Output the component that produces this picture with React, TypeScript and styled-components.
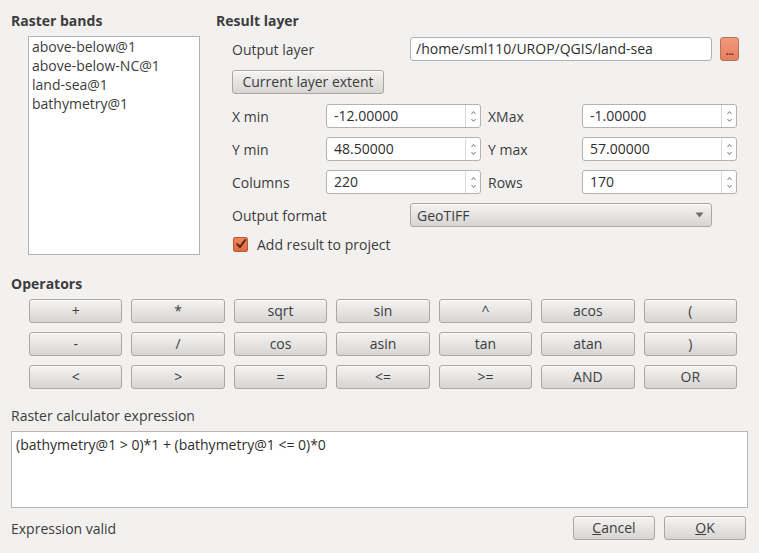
import { FC } from 'react'
import styled, { createGlobalStyle } from 'styled-components'

const GlobalStyle = createGlobalStyle`
  html, body {
    margin: 0;
    padding: 0;
    background: #f2f1f0;
  }
  body {
    font-family: 'Open Sans', 'Noto Sans', sans-serif;
    font-size: 14px;
    color: #3c3c3c;
  }
`

const bands = ['above-below@1', 'above-below-NC@1', 'land-sea@1', 'bathymetry@1']

const operators = [
  ['+', '*', 'sqrt', 'sin', '^', 'acos', '('],
  ['-', '/', 'cos', 'asin', 'tan', 'atan', ')'],
  ['<', '>', '=', '<=', '>=', 'AND', 'OR'],
]

const extents = [
  ['X min', '-12.00000', 'XMax', '-1.00000'],
  ['Y min', '48.50000', 'Y max', '57.00000'],
  ['Columns', '220', 'Rows', '170'],
]

const SpinArrows: FC = () => (
  <Arrows>
    <svg width="7" height="5" viewBox="0 0 7 5">
      <path d="M1.5 4 L3.5 1.5 L5.5 4" fill="none" stroke="#7a7876" strokeWidth="1" />
    </svg>
    <svg width="7" height="5" viewBox="0 0 7 5">
      <path d="M1.5 1 L3.5 3.5 L5.5 1" fill="none" stroke="#7a7876" strokeWidth="1" />
    </svg>
  </Arrows>
)

const SpinBox: FC<{ value: string }> = ({ value }) => (
  <Spin>
    <SpinValue>{value}</SpinValue>
    <SpinArrows />
  </Spin>
)

export default function App() {
  return (
    <Dialog>
      <GlobalStyle />
      <Top>
        <BandsSection>
          <Heading>Raster bands</Heading>
          <BandList>
            {bands.map((b) => (
              <BandItem key={b}>{b}</BandItem>
            ))}
          </BandList>
        </BandsSection>
        <ResultSection>
          <Heading>Result layer</Heading>
          <Form>
            <FieldRow>
              <WideLabel>Output layer</WideLabel>
              <PathInput>/home/sml110/UROP/QGIS/land-sea</PathInput>
              <BrowseButton>...</BrowseButton>
            </FieldRow>
            <ExtentButton>Current layer extent</ExtentButton>
            <ExtentGrid>
              {extents.map(([l1, v1, l2, v2]) => (
                <ExtentRow key={l1}>
                  <span>{l1}</span>
                  <SpinBox value={v1} />
                  <span>{l2}</span>
                  <SpinBox value={v2} />
                </ExtentRow>
              ))}
            </ExtentGrid>
            <FieldRow>
              <WideLabel>Output format</WideLabel>
              <Combo>
                <span>GeoTIFF</span>
                <svg width="9" height="6" viewBox="0 0 9 6">
                  <path d="M0.5 0.5 L8.5 0.5 L4.5 5.5 Z" fill="#6e6c6a" />
                </svg>
              </Combo>
            </FieldRow>
            <CheckRow>
              <CheckBox>
                <svg width="12" height="12" viewBox="0 0 12 12">
                  <path
                    d="M2.2 6.2 L5 9 L10.2 2"
                    fill="none"
                    stroke="#4a2414"
                    strokeWidth="1.9"
                    strokeLinecap="round"
                    strokeLinejoin="round"
                  />
                </svg>
              </CheckBox>
              <span>Add result to project</span>
            </CheckRow>
          </Form>
        </ResultSection>
      </Top>

      <OperatorsHeading>Operators</OperatorsHeading>
      <OperatorGrid>
        {operators.flat().map((op) => (
          <OpButton key={op}>{op}</OpButton>
        ))}
      </OperatorGrid>

      <ExprLabel>Raster calculator expression</ExprLabel>
      <ExprBox>(bathymetry@1 &gt; 0)*1 + (bathymetry@1 &lt;= 0)*0</ExprBox>

      <Footer>
        <span>Expression valid</span>
        <ButtonBox>
          <DialogButton>
            <u>C</u>ancel
          </DialogButton>
          <DialogButton>
            <u>O</u>K
          </DialogButton>
        </ButtonBox>
      </Footer>
    </Dialog>
  )
}

const Dialog = styled.div`
  width: 759px;
  height: 553px;
  box-sizing: border-box;
  padding: 12px 11px 0 11px;
  display: flex;
  flex-direction: column;
`

const Top = styled.div`
  display: flex;
  height: 243px;
`

const Heading = styled.div`
  font-weight: bold;
  line-height: 18px;
  height: 18px;
`

const BandsSection = styled.div`
  width: 205px;
  display: flex;
  flex-direction: column;
`

const BandList = styled.div`
  margin: 6px 0 0 17px;
  width: 172px;
  height: 219px;
  box-sizing: border-box;
  background: #fff;
  border: 1px solid #b4b2b0;
  padding: 0 3px;
`

const BandItem = styled.div`
  line-height: 19px;
`

const ResultSection = styled.div`
  flex: 1;
  display: flex;
  flex-direction: column;
`

const Form = styled.div`
  margin: 7px 0 0 16px;
  display: flex;
  flex-direction: column;
`

const FieldRow = styled.div`
  display: flex;
  align-items: center;
  height: 24px;
`

const WideLabel = styled.span`
  width: 178px;
`

const PathInput = styled.div`
  width: 302px;
  height: 24px;
  box-sizing: border-box;
  background: #fff;
  border: 1px solid #b4b2b0;
  border-radius: 3px;
  padding: 0 5px;
  line-height: 22px;
  color: #2e2e2e;
`

const BrowseButton = styled.div`
  margin-left: 8px;
  width: 19px;
  height: 24px;
  box-sizing: border-box;
  border: 1px solid #b9735c;
  border-radius: 3px;
  background: linear-gradient(#f29a7c, #e57f5f);
  color: #5b3326;
  font-size: 11px;
  line-height: 26px;
  text-align: center;
  font-weight: bold;
  letter-spacing: -0.5px;
`

const buttonLook = `
  box-sizing: border-box;
  border: 1px solid #a9a7a5;
  border-radius: 3px;
  background: linear-gradient(#f5f4f3, #d7d5d3);
  box-shadow: inset 0 1px 0 rgba(255, 255, 255, 0.7);
  color: #3c3c3c;
`

const ExtentButton = styled.div`
  ${buttonLook}
  margin-top: 9px;
  width: 152px;
  height: 24px;
  line-height: 22px;
  text-align: center;
`

const ExtentGrid = styled.div`
  margin-top: 10px;
  display: flex;
  flex-direction: column;
  gap: 9px;
  margin-bottom: 9px;
`

const ExtentRow = styled.div`
  display: grid;
  grid-template-columns: 94px 155px 101px 155px;
  align-items: center;
  height: 24px;
  & > span:nth-of-type(2) {
    padding-left: 7px;
  }
`

const Spin = styled.div`
  display: flex;
  height: 24px;
  box-sizing: border-box;
  background: #fff;
  border: 1px solid #b4b2b0;
  border-radius: 3px;
`

const SpinValue = styled.div`
  flex: 1;
  padding-left: 7px;
  line-height: 22px;
  color: #2e2e2e;
`

const Arrows = styled.div`
  width: 14px;
  border-left: 1px solid #dcdad8;
  display: flex;
  flex-direction: column;
  align-items: center;
  justify-content: center;
  gap: 3px;
`

const Combo = styled.div`
  ${buttonLook}
  width: 302px;
  height: 24px;
  display: flex;
  align-items: center;
  justify-content: space-between;
  padding: 0 7px 0 6px;
`

const CheckRow = styled.div`
  margin-top: 7px;
  display: flex;
  align-items: center;
  gap: 9px;
  height: 20px;
`

const CheckBox = styled.div`
  margin-left: 1px;
  width: 15px;
  height: 15px;
  box-sizing: border-box;
  border: 1px solid #b55a33;
  border-radius: 2px;
  background: linear-gradient(#f0845a, #dd6a3e);
  display: flex;
  align-items: center;
  justify-content: center;
`

const OperatorsHeading = styled(Heading)`
  margin-top: 20px;
`

const OperatorGrid = styled.div`
  margin: 6px 0 0 18px;
  width: 708px;
  display: grid;
  grid-template-columns: repeat(7, 1fr);
  grid-auto-rows: 24px;
  gap: 9px 9px;
`

const OpButton = styled.div`
  ${buttonLook}
  line-height: 22px;
  text-align: center;
`

const ExprLabel = styled.div`
  margin-top: 18px;
  line-height: 18px;
`

const ExprBox = styled.div`
  margin-top: 6px;
  width: 737px;
  height: 77px;
  box-sizing: border-box;
  background: #fff;
  border: 1px solid #b8b6b4;
  padding: 3px 4px;
  line-height: 20px;
  color: #2e2e2e;
`

const Footer = styled.div`
  margin-top: 8px;
  width: 735px;
  height: 24px;
  display: flex;
  align-items: center;
  justify-content: space-between;
`

const ButtonBox = styled.div`
  display: flex;
  gap: 9px;
`

const DialogButton = styled.div`
  ${buttonLook}
  width: 82px;
  height: 24px;
  line-height: 22px;
  text-align: center;
`
